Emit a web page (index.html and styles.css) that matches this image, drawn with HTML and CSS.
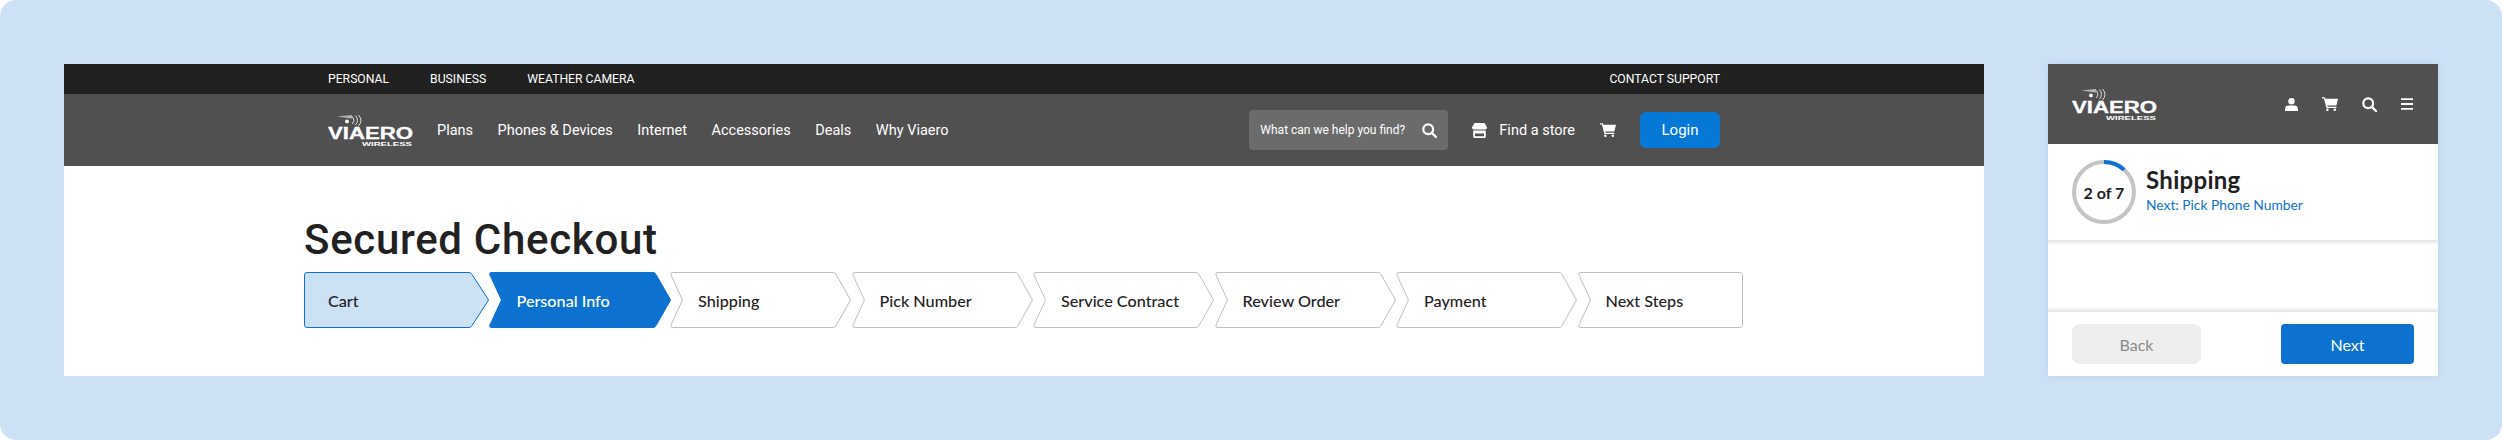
FILE: index.html
```html
<!DOCTYPE html>
<html lang="en">
<head>
    <meta charset="UTF-8">
    <meta name="viewport" content="width=device-width, initial-scale=1.0">
    <title>Viaero - Secured Checkout</title>
    <link rel="stylesheet" href="styles.css">
</head>
<body>
    <svg class="defs" aria-hidden="true">
        <symbol id="waves" viewBox="0 0 85 14">
            <path d="M9 2.6 24 1v3.4z" fill="#b5b5b5"/>
            <circle cx="19" cy="7.4" r="1.9" fill="#fff"/>
            <path d="M24.5 2.5q3 4 0 7.5M27.5 1.5q4 5 0 9.5M30.5 1q5 5.5 0 11" fill="none" stroke="#fff" stroke-width=".8"/>
        </symbol>
        <symbol id="cart" viewBox="0 0 16 14">
            <path d="M0 .2h2.8l.5 1.6H16l-1.6 6.6H5.2l.4 1.4h8.8v1.2H4.4L1.9 1.4H0z"/>
            <circle cx="5.4" cy="12.7" r="1.3"/>
            <circle cx="12.8" cy="12.7" r="1.3"/>
        </symbol>
        <symbol id="search" viewBox="0 0 15 15">
            <circle cx="6.2" cy="6.2" r="4.9" fill="none" stroke="#fff" stroke-width="2.2"/>
            <path d="M9.8 9.8 14 14" fill="none" stroke="#fff" stroke-width="2.4" stroke-linecap="round"/>
        </symbol>
        <symbol id="step" viewBox="0 0 182 56" preserveAspectRatio="none">
            <path d="M4 .5H164Q166 .5 167 2.5L181 27Q181.5 28 181 29L167 53.5Q166 55.5 164 55.5H4Q1 55.5 2 53L13 29Q13.5 28 13 27L2 3Q1 .5 4 .5Z"/>
        </symbol>
    </svg>

    <div class="page">
        <div class="desktop">
            <div class="topbar">
                <a>PERSONAL</a>
                <a>BUSINESS</a>
                <a>WEATHER CAMERA</a>
                <a class="push">CONTACT SUPPORT</a>
            </div>
            <div class="navbar">
                <svg class="logo" viewBox="0 0 85 32">
                    <use href="#waves" width="85" height="14"/>
                    <text x="0" y="25" class="logo-name" textLength="85" lengthAdjust="spacingAndGlyphs">VIAERO</text>
                    <text x="34" y="31.5" class="logo-sub" textLength="50" lengthAdjust="spacingAndGlyphs">WIRELESS</text>
                </svg>
                <nav class="nav-links">
                    <a>Plans</a>
                    <a>Phones &amp; Devices</a>
                    <a>Internet</a>
                    <a>Accessories</a>
                    <a>Deals</a>
                    <a>Why Viaero</a>
                </nav>
                <div class="search-box">
                    <span>What can we help you find?</span>
                    <svg class="icon-search"><use href="#search"/></svg>
                </div>
                <a class="store-link">
                    <svg class="icon-store" viewBox="0 0 15 15">
                        <path d="M2.5 0h10L15 4.2Q15 6.4 13 6.4H2Q0 6.4 0 4.2z"/>
                        <path d="M1.2 7.6h12.6V13.5Q13.8 15 12.3 15H2.7Q1.2 15 1.2 13.5zM3 10.6v2.6h9v-2.6z" fill-rule="evenodd"/>
                    </svg>
                    Find a store
                </a>
                <svg class="icon-cart"><use href="#cart"/></svg>
                <a class="login">Login</a>
            </div>
            <div class="checkout">
                <h1>Secured Checkout</h1>
                <div class="steps">
                    <div class="step step-first">
                        <svg viewBox="0 0 185 56" preserveAspectRatio="none"><path d="M3 .5H165Q167 .5 168 2.5L184 27Q184.5 28 184 29L168 53.5Q167 55.5 165 55.5H3Q.5 55.5 .5 53V3Q.5 .5 3 .5Z"/></svg>
                        <span>Cart</span>
                    </div>
                    <div class="step step-active">
                        <svg><use href="#step"/></svg>
                        <span>Personal Info</span>
                    </div>
                    <div class="step">
                        <svg><use href="#step"/></svg>
                        <span>Shipping</span>
                    </div>
                    <div class="step">
                        <svg><use href="#step"/></svg>
                        <span>Pick Number</span>
                    </div>
                    <div class="step">
                        <svg><use href="#step"/></svg>
                        <span>Service Contract</span>
                    </div>
                    <div class="step">
                        <svg><use href="#step"/></svg>
                        <span>Review Order</span>
                    </div>
                    <div class="step">
                        <svg><use href="#step"/></svg>
                        <span>Payment</span>
                    </div>
                    <div class="step step-last">
                        <svg viewBox="0 0 166 56" preserveAspectRatio="none"><path d="M4 .5H163Q165.5 .5 165.5 3V53Q165.5 55.5 163 55.5H4Q1 55.5 2 53L13 29Q13.5 28 13 27L2 3Q1 .5 4 .5Z"/></svg>
                        <span>Next Steps</span>
                    </div>
                </div>
            </div>
        </div>

        <div class="phone">
            <div class="phone-head">
                <svg class="logo" viewBox="0 0 85 32">
                    <use href="#waves" width="85" height="14"/>
                    <text x="0" y="25" class="logo-name" textLength="85" lengthAdjust="spacingAndGlyphs">VIAERO</text>
                    <text x="34" y="31.5" class="logo-sub" textLength="50" lengthAdjust="spacingAndGlyphs">WIRELESS</text>
                </svg>
                <div class="phone-icons">
                    <svg class="icon-user" viewBox="0 0 13 13">
                        <circle cx="6.5" cy="3.2" r="3.2"/>
                        <path d="M0 13v-1.8Q0 7.4 3.6 7.4h5.8Q13 7.4 13 11.2V13z"/>
                    </svg>
                    <svg class="icon-cart"><use href="#cart"/></svg>
                    <svg class="icon-search"><use href="#search"/></svg>
                    <svg class="icon-menu" viewBox="0 0 12 12">
                        <path d="M0 .2h12v1.8H0zM0 5.1h12v1.8H0zM0 10h12v1.8H0z"/>
                    </svg>
                </div>
            </div>
            <div class="summary">
                <div class="ring">
                    <svg viewBox="0 0 64 64">
                        <circle cx="32" cy="32" r="30" class="ring-track"/>
                        <circle cx="32" cy="32" r="30" class="ring-fill"/>
                    </svg>
                    <span>2 of 7</span>
                </div>
                <div class="summary-text">
                    <h2>Shipping</h2>
                    <a>Next: Pick Phone Number</a>
                </div>
            </div>
            <div class="phone-body"></div>
            <div class="phone-foot">
                <button class="btn btn-back">Back</button>
                <button class="btn btn-next">Next</button>
            </div>
        </div>
    </div>
</body>
</html>
```

FILE: styles.css
```css
html, body {
    margin: 0;
    background: #fff;
    overflow: hidden;
}

.defs {
    width: 0;
    height: 0;
    display: block;
}

.logo-name {
    font: bold 16px "Liberation Sans", sans-serif;
    fill: #fff;
    stroke: #fff;
    stroke-width: 0.3;
}

.logo-sub {
    font: bold 5px "Liberation Sans", sans-serif;
    fill: #fff;
}

.page {
    display: flex;
    gap: 64px;
    box-sizing: border-box;
    width: 2502px;
    height: 440px;
    padding: 64px;
    background: #cde1f5;
    border-radius: 16px;
}

/* desktop frame */
.desktop {
    width: 1920px;
    background: #fff;
    font-family: Roboto, sans-serif;
}

.topbar {
    display: flex;
    align-items: center;
    gap: 41px;
    height: 30px;
    padding: 0 264px;
    background: #212121;
    color: #fff;
    font-size: 12.2px;
}

.push {
    margin-left: auto;
}

.navbar {
    display: flex;
    align-items: center;
    height: 72px;
    padding: 0 264px;
    background: #505050;
    color: #fff;
}

.logo {
    width: 85px;
    height: 32px;
    flex-shrink: 0;
}

.nav-links {
    display: flex;
    gap: 24.5px;
    margin-left: 24px;
    font-size: 14.5px;
}

.search-box {
    display: flex;
    align-items: center;
    justify-content: space-between;
    box-sizing: border-box;
    width: 199px;
    height: 40px;
    margin-left: auto;
    padding: 0 11px;
    background: #6b6b6b;
    border-radius: 4px;
    font-size: 12px;
}

.icon-search {
    width: 15px;
    height: 15px;
}

.store-link {
    display: flex;
    align-items: center;
    gap: 12px;
    margin-left: 24px;
    font-size: 14.5px;
}

.icon-store {
    width: 15px;
    height: 15px;
    fill: #fff;
}

.icon-cart {
    width: 16px;
    height: 14px;
    fill: #fff;
}

.navbar .icon-cart {
    margin-left: 25px;
}

.login {
    width: 80px;
    height: 36px;
    margin-left: 24px;
    background: #0678d6;
    border-radius: 6px;
    font-size: 15px;
    line-height: 36px;
    text-align: center;
}

.checkout {
    padding: 50px 240px 0;
    color: #212121;
}

h1 {
    margin: 0 0 8px;
    font-size: 42px;
    font-weight: 500;
    letter-spacing: 0.7px;
    line-height: 48px;
}

.steps {
    display: flex;
    width: 1440px;
    font-family: Lato, sans-serif;
    font-size: 16.2px;
}

.step {
    display: grid;
    align-items: center;
    width: 181.5px;
    height: 56px;
    flex-shrink: 0;
}

.step svg {
    grid-area: 1 / 1;
    width: 182px;
    height: 56px;
    fill: #fff;
    stroke: #bfbfbf;
}

.step span {
    grid-area: 1 / 1;
    padding-left: 29px;
    font-weight: 500;
    color: #212121;
}

.step-first {
    width: 183.5px;
}

.step-first svg {
    width: 185px;
    fill: #cde1f5;
    stroke: #0c71cf;
}

.step-first span {
    padding-left: 24px;
}

.step-active svg {
    width: 183px;
    fill: #0c71cf;
    stroke: #0c71cf;
}

.step-active span {
    color: #fff;
}

.step-last {
    width: 166px;
}

.step-last svg {
    width: 166px;
}

/* phone frame */
.phone {
    display: flex;
    flex-direction: column;
    width: 390px;
    background: #fff;
    color: #212121;
    font-family: Lato, sans-serif;
    box-shadow: 0 0 6px rgba(12, 113, 207, 0.12);
}

.phone-head {
    display: flex;
    align-items: flex-start;
    justify-content: space-between;
    box-sizing: border-box;
    height: 80px;
    padding: 24px 25px 0 24px;
    background: #505050;
}

.phone-icons {
    display: flex;
    align-items: center;
    gap: 24px;
    height: 14px;
    margin-top: 9px;
}

.icon-user {
    width: 13px;
    height: 13px;
    fill: #fff;
}

.icon-menu {
    width: 12px;
    height: 12px;
    fill: #fff;
}

.summary {
    display: flex;
    align-items: center;
    gap: 10px;
    height: 96px;
    padding: 0 24px;
}

.ring {
    display: grid;
    place-items: center;
    width: 64px;
    height: 64px;
    font-size: 16px;
    font-weight: 700;
}

.ring svg, .ring span {
    grid-area: 1 / 1;
}

.ring svg {
    width: 64px;
    height: 64px;
    transform: rotate(-90deg);
}

.ring circle {
    fill: none;
    stroke-width: 4;
}

.ring-track {
    stroke: #c4c4c4;
}

.ring-fill {
    stroke: #0c71cf;
    stroke-dasharray: 22 170;
}

.summary-text {
    padding-bottom: 5px;
}

h2 {
    margin: 0 0 1px;
    font-size: 24px;
    font-weight: 700;
    letter-spacing: 0.3px;
    line-height: 30px;
}

.summary-text a {
    display: block;
    color: #0c71cf;
    font-size: 13.8px;
    line-height: 18px;
}

.phone-body {
    height: 72px;
    box-shadow: inset 0 5px 4px -3px #dcdcdc, inset 0 -5px 4px -3px #dcdcdc;
}

.phone-foot {
    display: flex;
    justify-content: space-between;
    padding: 12px 24px;
}

.btn {
    height: 40px;
    border: none;
    font-family: inherit;
    font-size: 16px;
}

.btn-back {
    width: 129px;
    background: #eee;
    border-radius: 8px;
    color: #8a8a8a;
}

.btn-next {
    width: 133px;
    background: #0c71cf;
    border-radius: 4px;
    color: #fff;
}
```
